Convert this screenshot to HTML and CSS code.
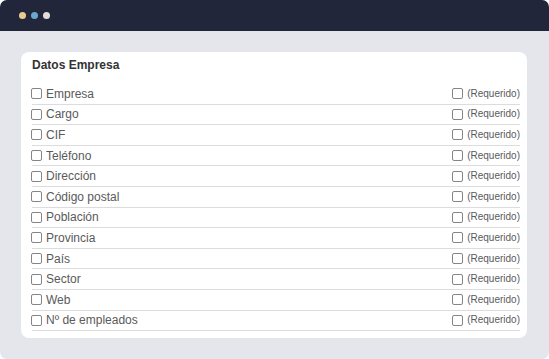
FILE: index.html
```html
<!DOCTYPE html>
<html lang="es">
<head>
<meta charset="utf-8">
<title>Datos Empresa</title>
<link rel="stylesheet" href="styles.css">
</head>
<body>
<div class="window">
  <div class="topbar">
    <span class="dot dot-yellow"></span>
    <span class="dot dot-blue"></span>
    <span class="dot dot-pink"></span>
  </div>
  <div class="content">
    <div class="card">
      <h2 class="title">Datos Empresa</h2>
      <ul class="fields">
        <li class="row"><label class="field"><span class="box"></span>Empresa</label><label class="req"><span class="box"></span>(Requerido)</label></li>
        <li class="row"><label class="field"><span class="box"></span>Cargo</label><label class="req"><span class="box"></span>(Requerido)</label></li>
        <li class="row"><label class="field"><span class="box"></span>CIF</label><label class="req"><span class="box"></span>(Requerido)</label></li>
        <li class="row"><label class="field"><span class="box"></span>Teléfono</label><label class="req"><span class="box"></span>(Requerido)</label></li>
        <li class="row"><label class="field"><span class="box"></span>Dirección</label><label class="req"><span class="box"></span>(Requerido)</label></li>
        <li class="row"><label class="field"><span class="box"></span>Código postal</label><label class="req"><span class="box"></span>(Requerido)</label></li>
        <li class="row"><label class="field"><span class="box"></span>Población</label><label class="req"><span class="box"></span>(Requerido)</label></li>
        <li class="row"><label class="field"><span class="box"></span>Provincia</label><label class="req"><span class="box"></span>(Requerido)</label></li>
        <li class="row"><label class="field"><span class="box"></span>País</label><label class="req"><span class="box"></span>(Requerido)</label></li>
        <li class="row"><label class="field"><span class="box"></span>Sector</label><label class="req"><span class="box"></span>(Requerido)</label></li>
        <li class="row"><label class="field"><span class="box"></span>Web</label><label class="req"><span class="box"></span>(Requerido)</label></li>
        <li class="row"><label class="field"><span class="box"></span>Nº de empleados</label><label class="req"><span class="box"></span>(Requerido)</label></li>
      </ul>
    </div>
  </div>
</div>
</body>
</html>
```

FILE: styles.css
```css
* { box-sizing: border-box; }
html, body { margin: 0; padding: 0; background: #ffffff; }
body { font-family: "Liberation Sans", Arial, sans-serif; }

.window {
  width: 549px;
  height: 359px;
  border-radius: 7px;
  overflow: hidden;
  background: #e5e6eb;
  display: flex;
  flex-direction: column;
}

.topbar {
  height: 31px;
  background: #21263a;
  display: flex;
  align-items: center;
  gap: 5px;
  padding-left: 19px;
  padding-bottom: 1px;
}

.dot {
  width: 7px;
  height: 7px;
  border-radius: 50%;
}
.dot-yellow { background: #e9ca92; }
.dot-blue { background: #6aa6ce; }
.dot-pink { background: #e7dbd8; }

.content {
  padding: 21px 22px 0 21px;
}

.card {
  background: #ffffff;
  border-radius: 8px;
  padding: 6px 7px 7px 10px;
}

.title {
  margin: 0 0 12px 1px;
  font-size: 12px;
  line-height: 14px;
  font-weight: bold;
  color: #333;
}

.fields {
  list-style: none;
  margin: 0;
  padding: 0;
}

.row {
  height: 20.6px;
  border-bottom: 1px solid #dcdcdc;
  display: flex;
  align-items: center;
  justify-content: space-between;
  color: #5a5a5a;
  margin-left: 1px;
}

.field {
  display: flex;
  align-items: center;
  gap: 4px;
  font-size: 12px;
  line-height: 14px;
  margin-left: -1px;
}

.req {
  display: flex;
  align-items: center;
  gap: 4px;
  font-size: 10px;
  line-height: 12px;
}

.box {
  width: 11px;
  height: 11px;
  border: 1px solid #858585;
  border-radius: 2px;
  background: #fff;
  flex: none;
}
```
